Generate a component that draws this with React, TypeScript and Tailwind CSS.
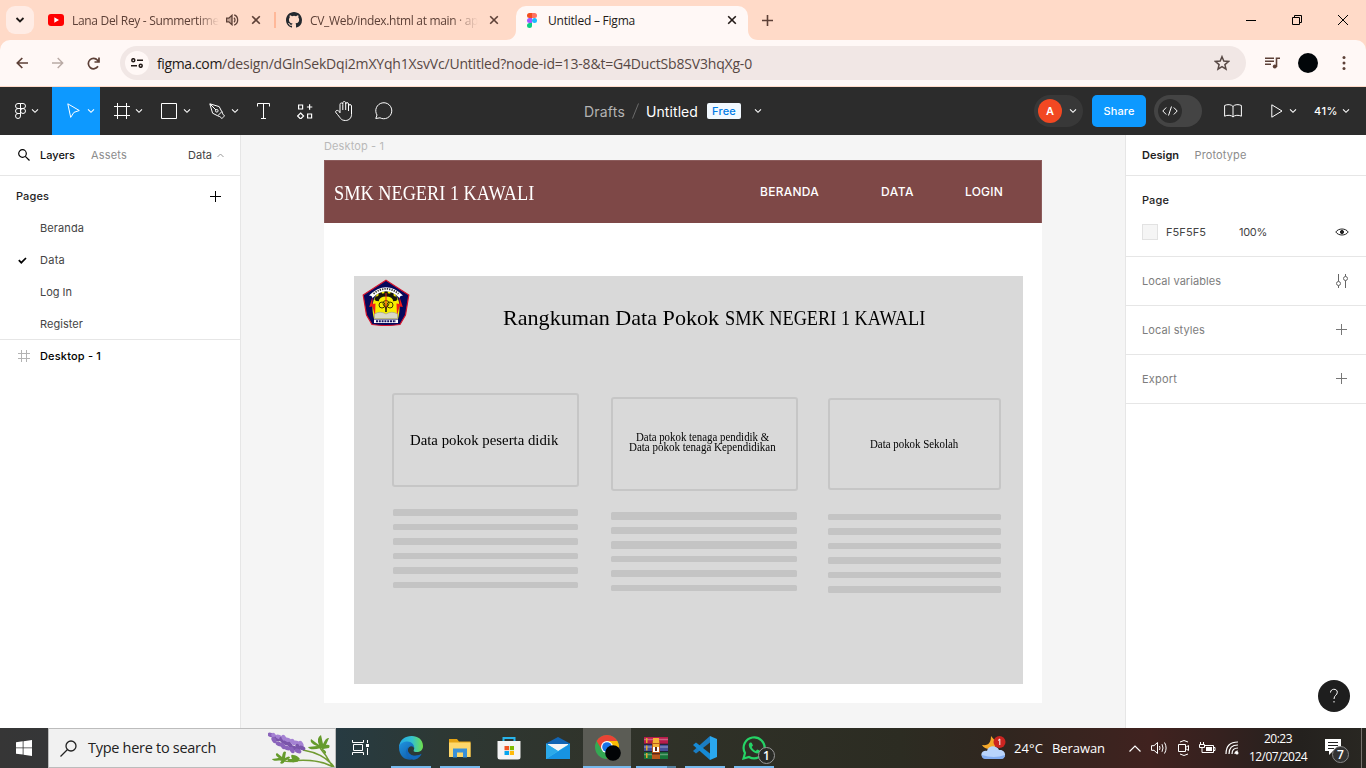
import React, { useLayoutEffect, useRef, useState } from "react";

/** Text set to a fixed measure: the tracking is worked out from the natural width. */
function T({ w, className = "", children }: { w: number; className?: string; children: string }) {
  const ref = useRef<HTMLSpanElement>(null);
  const [tracking, setTracking] = useState(0);
  useLayoutEffect(() => {
    const el = ref.current;
    if (!el) return;
    const natural = el.getBoundingClientRect().width;
    setTracking((w - natural) / children.length);
  }, [w, children]);
  return (
    <span className={"block shrink-0 whitespace-nowrap " + className} style={{ width: w }}>
      <span ref={ref} className="inline-block" style={{ letterSpacing: tracking }}>
        {children}
      </span>
    </span>
  );
}

/** Display text condensed or widened to a fixed measure. */
function Display({ w, className = "", children }: { w: number; className?: string; children: string }) {
  const ref = useRef<HTMLSpanElement>(null);
  const [scale, setScale] = useState(1);
  useLayoutEffect(() => {
    if (ref.current) setScale(w / ref.current.offsetWidth);
  }, [w, children]);
  return (
    <span className={"block shrink-0 whitespace-nowrap font-['Liberation_Serif',serif] " + className} style={{ width: w }}>
      <span ref={ref} className="inline-block origin-left" style={{ transform: `scaleX(${scale})` }}>
        {children}
      </span>
    </span>
  );
}

type IconProps = { w: number; h: number; className?: string; children: React.ReactNode; sw?: number };
function Icon({ w, h, className = "", children, sw = 1 }: IconProps) {
  return (
    <svg
      width={w}
      height={h}
      viewBox={`0 0 ${w} ${h}`}
      fill="none"
      stroke="currentColor"
      strokeWidth={sw}
      className={"block shrink-0 " + className}
    >
      {children}
    </svg>
  );
}

const Chevron = ({ className = "" }: { className?: string }) => (
  <Icon w={8} h={6} sw={1.1} className={className}>
    <path d="M1 1.3 4 4.3 7 1.3" />
  </Icon>
);
const Close = ({ className = "" }: { className?: string }) => (
  <Icon w={10} h={10} sw={1.6} className={className}>
    <path d="M1.2 1.2 8.8 8.8M8.8 1.2 1.2 8.8" />
  </Icon>
);
const Plus = ({ className = "" }: { className?: string }) => (
  <Icon w={11} h={11} className={className}>
    <path d="M5.5 0v11M0 5.5h11" />
  </Icon>
);

const UI = "font-['Open_Sans','Noto_Sans',sans-serif]";

function TabStrip() {
  return (
    <div className={"flex h-10 shrink-0 items-center bg-[#ffdac8] pl-1.5 text-[12px] text-[#5d4037] " + UI}>
      <div className="flex h-7 w-7 shrink-0 items-center justify-center rounded-[9px] bg-[#ffece5] text-[#1f1a18]">
        <Icon w={10} h={8} sw={1.8}><path d="M1.5 2 5 5.5 8.5 2" /></Icon>
      </div>
      <Icon w={16} h={12} className="ml-3.5">
        <rect width="16" height="12" rx="3" fill="#f00" stroke="none" />
        <path d="M6.3 3.3v5.4L11 6z" fill="#fff" stroke="none" />
      </Icon>
      <div className="ml-2 mt-px overflow-hidden [mask-image:linear-gradient(to_right,#000_85%,transparent)]">
        <T w={147}>Lana Del Rey - Summertime</T>
      </div>
      <Icon w={13} h={12} sw={1.3} className="ml-[7px]">
        <path d="M.5 4.2h2.3L6 1.3v9.4L2.8 7.8H.5z" fill="currentColor" fillOpacity=".35" />
        <path d="M8 3.7c1.3 1.2 1.3 3.4 0 4.6M8.2.9c4.6 1.6 4.6 8.6 0 10.2" />
      </Icon>
      <Close className="ml-[12px]" />
      <div className="ml-[13px] h-4 w-[2px] bg-[#ffb899]" />
      <svg width="16" height="16" viewBox="0 0 16 16" className="ml-[10px] shrink-0" fill="#24292f">
        <path d="M8 0C3.58 0 0 3.58 0 8c0 3.54 2.29 6.53 5.47 7.59.4.07.55-.17.55-.38v-1.49c-2.01.37-2.53-.49-2.69-.94-.09-.23-.48-.94-.82-1.13-.28-.15-.68-.52-.01-.53.63-.01 1.08.58 1.23.82.72 1.21 1.87.87 2.33.66.07-.52.28-.87.51-1.07-1.78-.2-3.64-.89-3.64-3.95 0-.87.31-1.59.82-2.15-.08-.2-.36-1.02.08-2.12 0 0 .67-.21 2.2.82a7.6 7.6 0 0 1 4 0c1.53-1.04 2.2-.82 2.2-.82.44 1.1.16 1.92.08 2.12.51.56.82 1.27.82 2.15 0 3.07-1.87 3.75-3.65 3.95.29.25.54.73.54 1.48v2.2c0 .21.15.46.55.38A8.01 8.01 0 0 0 16 8c0-4.42-3.58-8-8-8z" />
      </svg>
      <div className="ml-2 mt-px overflow-hidden [mask-image:linear-gradient(to_right,#000_84%,transparent)]">
        <T w={168}>CV_Web/index.html at main · ap</T>
      </div>
      <Close className="ml-[11px]" />
      <svg width="10" height="10" viewBox="0 0 10 10" className="ml-[7px] shrink-0 self-end" fill="#fff8f6">
        <path d="M10 0v10H0C6 10 10 6 10 0z" />
      </svg>
      <div className="flex h-[34px] w-[232px] shrink-0 items-center self-end rounded-t-[10px] bg-[#fff8f6] pb-[6px] pl-[11px] text-[#231a17]">
        <Icon w={10} h={15} className="mt-px">
          <g stroke="none">
            <path d="M5 0H2.5a2.5 2.5 0 0 0 0 5H5z" fill="#f24e1e" />
            <path d="M5 0h2.5a2.5 2.5 0 0 1 0 5H5z" fill="#ff7262" />
            <path d="M5 5H2.5a2.5 2.5 0 0 0 0 5H5z" fill="#a259ff" />
            <circle cx="7.5" cy="7.5" r="2.5" fill="#1abcfe" />
            <path d="M5 10H2.5A2.5 2.5 0 1 0 5 12.500z" fill="#0acf83" />
          </g>
        </Icon>
        <T w={87} className="ml-[11px] mt-[2px]">Untitled – Figma</T>
        <Close className="ml-[92px]" />
      </div>
      <svg width="10" height="10" viewBox="0 0 10 10" className="shrink-0 self-end" fill="#fff8f6">
        <path d="M0 0v10h10C4 10 0 6 0 0z" />
      </svg>
      <Icon w={11} h={11} sw={1.6} className="ml-[4px]"><path d="M5.5 0v11M0 5.500h11" /></Icon>
      <div className="ml-auto flex items-center text-black">
        <Icon w={10} h={10}><path d="M0 5.5h10" /></Icon>
        <Icon w={10} h={10} className="ml-[36px]">
          <path d="M.5 2.500h7v7h-7zM2.500 2.500v-2h7v7h-2" />
        </Icon>
        <Icon w={10} h={10} className="ml-[36px] mr-[18px]"><path d="M0 0 10 10M10 0 0 10" /></Icon>
      </div>
    </div>
  );
}

function AddressBar() {
  return (
    <div className="h-[47px] shrink-0 bg-[#ffdac8]">
      <div className="flex h-[46px] items-center rounded-t-[10px] bg-[#fff8f6] pl-4 text-[#5d4037]">
        <Icon w={12} h={12} sw={1.7}><path d="M12 6H1.500M6.300 1 1.300 6l5 5" /></Icon>
        <Icon w={12} h={12} sw={1.4} className="ml-6 text-[#b9aaa5]"><path d="M0 6h10.500M5.700 1l5 5-5 5" /></Icon>
        <Icon w={13} h={13} sw={1.7} className="ml-[23px]">
          <path d="M11 9.300A5.200 5.200 0 1 1 10.500 3.200L12 4.800M12 .5v4.500H7.500" />
        </Icon>
        <div className={"ml-[20px] flex h-[34px] w-[1126px] items-center rounded-full bg-[#f1e7e5] pl-[5px] text-[14px] " + UI}>
          <div className="flex h-6 w-6 items-center justify-center rounded-full bg-[#fff8f6] text-[#231a17]">
            <Icon w={12} h={10} sw={1.500}>
              <circle cx="2.300" cy="2.200" r="1.500" /><path d="M6 2.200h6M0 7.800h6" /><circle cx="9.700" cy="7.800" r="1.500" />
            </Icon>
          </div>
          <T w={65} className="ml-2 text-[#231a17]">figma.com</T>
          <T w={530} className="text-[#574844]">/design/dGlnSekDqi2mXYqh1XsvVc/Untitled?node-id=13-8&t=G4DuctSb8SV3hqXg-0</T>
          <Icon w={16} h={16} sw={1.500} className="ml-auto mr-4 text-[#574844]">
            <path d="m8 1.700 1.800 4.400 4.700.4-3.600 3.100 1.100 4.600L8 11.700l-4 2.500 1.100-4.600L1.500 6.500l4.700-.4z" />
          </Icon>
        </div>
        <Icon w={15} h={12} sw={1.600} className="ml-[19px]">
          <path d="M0 1.200h9M0 4.200h9M0 7.200h6M11.500 10V1.200H15" />
          <circle cx="9.800" cy="9.500" r="2" fill="currentColor" stroke="none" />
        </Icon>
        <div className="ml-[18px] h-5 w-5 rounded-full bg-[#020609]" />
        <Icon w={4} h={16} className="ml-[24px]">
          <g fill="currentColor" stroke="none"><circle cx="2" cy="2.500" r="1.500" /><circle cx="2" cy="8" r="1.500" /><circle cx="2" cy="13.500" r="1.500" /></g>
        </Icon>
      </div>
    </div>
  );
}

function FigmaBar() {
  return (
    <div className="flex h-12 shrink-0 items-center bg-[#2c2c2c] font-[Inter,sans-serif] text-white">
      <Icon w={11} h={16} className="ml-[15px]">
        <path d="M5.500.5H3a2.500 2.500 0 0 0 0 5h2.500zM5.500.5H8a2.500 2.500 0 0 1 0 5H5.500zM5.500 5.500H3a2.500 2.500 0 0 0 0 5h2.500zM5.500 10.500H3A2.500 2.500 0 1 0 5.500 13z" />
        <circle cx="8" cy="8" r="2.500" />
      </Icon>
      <Chevron className="ml-[5px]" />
      <div className="ml-[13px] flex h-12 w-12 items-center bg-[#0d99ff] pl-[15px]">
        <Icon w={13} h={16}><path d="m.8.8 11.500 6.700-5.400 1.900-3.200 5z" /></Icon>
        <Chevron className="ml-[7px]" />
      </div>
      <Icon w={16} h={16} className="ml-[14px]"><path d="M3.500 0v16M12.500 0v16M0 3.500h16M0 12.500h16" /></Icon>
      <Chevron className="ml-[5px]" />
      <Icon w={16} h={16} className="ml-[18px]"><path d="M.5.5h15v15H.5z" /></Icon>
      <Chevron className="ml-[6px]" />
      <Icon w={16} h={16} className="ml-[18px]">
        <path d="m.8.8 2.800 9.400 5.100 2.600 4.100-4.100-2.600-5.100zM1 1l6 6" />
        <circle cx="7.800" cy="7.800" r="1.300" />
        <path d="M13 8.500c.5 2.500 1.300 3.500 2.300 3.800-.3 1.700-1.300 2.700-3 3-.3-1-1.300-1.800-3.500-2.400" />
      </Icon>
      <Chevron className="ml-[6px]" />
      <Icon w={13} h={16} className="ml-[18px]"><path d="M.5 3.500v-3h12v3M6.500.5v15M4 15.500h5" /></Icon>
      <Icon w={16} h={15} sw={1.200} className="ml-[27px]">
        <path d="M1.600 1h4v4h-4zM10.600 10h4v4h-4zM12.600.3v5.400M9.900 3h5.400M3.600 9l3 3-3 3-3-3z" />
      </Icon>
      <Icon w={18} h={20} className="ml-[22px]">
        <path d="M5 12V3.500c0-2 2.800-2 2.800 0V9m0-6V2c0-2 2.900-2 2.900 0v7m0-6c0-1.900 2.800-1.900 2.800 0v7m0-5c0-1.900 3-1.900 3 0v8.500c0 3.500-2.500 6-6 6-5 0-5-3-9.400-7.600-1.500-1.700.8-3.400 2.300-2L5 11.400" />
      </Icon>
      <Icon w={18} h={18} className="ml-[22px]">
        <path d="M2 13A8 8 0 1 1 5 15.800L.8 16.500z" />
      </Icon>
      <T w={41} className="ml-[191px] text-[14px] text-[#b3b3b3]">Drafts</T>
      <Icon w={7} h={16} className="ml-[7px] text-[#6b6b6b]"><path d="M6.500.5.500 15.500" /></Icon>
      <T w={52} className="ml-[7px] text-[14px]">Untitled</T>
      <div className="ml-[9px] flex h-4 w-[34px] items-center justify-center rounded-[2px] bg-[#f2f9ff] text-[11px] font-medium text-[#007be5]">
        <T w={24}>Free</T>
      </div>
      <Chevron className="ml-[13px]" />
      <div className="ml-auto flex h-8 w-[49px] items-center rounded-full bg-[#383838] pl-1">
        <div className="flex h-6 w-6 items-center justify-center rounded-full bg-[#f24822] text-[11px] font-semibold">A</div>
        <Chevron className="ml-[7px]" />
      </div>
      <div className="ml-[9px] flex h-8 w-[54px] items-center justify-center rounded-[5px] bg-[#0d99ff] text-[11px] font-medium">
        <T w={31}>Share</T>
      </div>
      <div className="ml-2 flex h-8 w-12 items-center rounded-full bg-[#444] pl-1">
        <div className="flex h-6 w-6 items-center justify-center rounded-full bg-[#2c2c2c]">
          <Icon w={16} h={10}><path d="M4.200 1.500.8 5l3.400 3.500M11.800 1.500 15.200 5l-3.400 3.500M9.500.5l-3 9" /></Icon>
        </div>
      </div>
      <Icon w={18} h={14} className="ml-[22px]">
        <path d="M9 2.500C7.500.2 3 .2.600 1.500v10.700c2.500-1.300 6.900-1.300 8.400.8 1.500-2.100 5.900-2.100 8.400-.8V1.500C15 .2 10.500.2 9 2.500zM9 2.500V13" />
      </Icon>
      <Icon w={12} h={14} className="ml-[29px]"><path d="M.8.8 11 7 .8 13.200z" /></Icon>
      <Chevron className="ml-[6px]" />
      <T w={24} className="ml-[17px] text-[11px] font-medium">41%</T>
      <Chevron className="ml-[4px] mr-[16px]" />
    </div>
  );
}

function LeftPanel() {
  const pages: [string, number][] = [["Beranda", 44], ["Data", 25], ["Log In", 32], ["Register", 43]];
  return (
    <aside className="flex w-[241px] shrink-0 flex-col border-r border-[#e6e6e6] bg-white text-[11px] text-[#444]">
      <div className="flex h-[41px] items-center border-b border-[#e6e6e6] pl-[18px]">
        <Icon w={12} h={12} sw={1.200} className="text-black"><circle cx="4.500" cy="4.500" r="3.800" /><path d="m7.300 7.300 4.200 4.200" /></Icon>
        <T w={35} className="ml-[10px] font-medium text-[#111]">Layers</T>
        <T w={36} className="ml-[16px] text-[#8c8c8c]">Assets</T>
        <T w={24} className="ml-[61px]">Data</T>
        <Icon w={7} h={5} className="ml-[5px] text-[#999]"><path d="M.5 4 3.500 1l3 3" /></Icon>
      </div>
      <div className="flex h-9 items-center pl-4 pt-1">
        <T w={33} className="font-medium text-[#1e1e1e]">Pages</T>
        <Icon w={11} h={11} className="ml-[161px] text-black"><path d="M5.500 0v11M0 5.500h11" /></Icon>
      </div>
      <div className="border-b border-[#e6e6e6]">
        {pages.map(([name, w], i) => (
          <div key={name} className={"flex items-center pl-[18px] " + (i === 3 ? "h-[31px] pt-px" : "h-8")}>
            <div className="w-[22px]">
              {name === "Data" && <Icon w={9} h={7} sw={1.700} className="text-black"><path d="M.8 3.200 3.300 5.700 8 1" /></Icon>}
            </div>
            <T w={w}>{name}</T>
          </div>
        ))}
      </div>
      <div className="flex h-8 items-center pl-[18px]">
        <Icon w={12} h={12} className="text-[#b3b3b3]"><path d="M3.500 0v12M8.500 0v12M0 3.500h12M0 8.500h12" /></Icon>
        <T w={61} className="ml-[10px] font-medium text-black">Desktop - 1</T>
      </div>
    </aside>
  );
}

function Bars({ className, tall = false }: { className: string; tall?: boolean }) {
  return (
    <div className={"flex flex-col " + className}>
      {[0, 1, 2, 3, 4, 5].map((i) => (
        <div key={i} className="h-[14.500px]">
          <div className={"rounded-[1.500px] bg-[#c4c4c4] " + (tall && i < 3 ? "h-[7.600px]" : "h-[6.800px]")} />
        </div>
      ))}
    </div>
  );
}

function Canvas() {
  return (
    <main className="flex min-w-0 flex-1 flex-col bg-[#f5f5f5] pl-[83px]">
      <div className="flex h-[25px] items-center text-[11px] text-[#b9b9b9]">
        <T w={60} className="-mt-[3px]">Desktop - 1</T>
      </div>
      <div className="h-[543px] w-[718px] bg-white">
        <header className="flex h-[63px] items-center border border-[#8c5c5c] border-b-0 bg-[#7e4847] pl-[9px] text-white">
          <Display w={200} className="mt-[2px] text-[21.500px]">SMK NEGERI 1 KAWALI</Display>
          <T w={59} className="ml-[226px] text-[12px] font-medium">BERANDA</T>
          <T w={33} className="ml-[62px] text-[12px] font-medium">DATA</T>
          <T w={38} className="ml-[51px] text-[12px] font-medium">LOGIN</T>
        </header>
        <section className="ml-[30px] mt-[53px] h-[408px] w-[669px] bg-[#d9d9d9]">
          <div className="flex h-[117px] items-start">
            <Crest />
            <Display w={216} className="ml-[93px] mt-[26px] text-[22px] leading-8 text-black">Rangkuman Data Pokok</Display>
            <Display w={200} className="ml-[6px] mt-[26px] text-[21.500px] leading-8 text-black">SMK NEGERI 1 KAWALI</Display>
          </div>
          <div className="flex pl-[38px] text-black">
            <div className="w-[187px]">
              <div className="flex h-[94px] items-center justify-center rounded-[3px] border-2 border-[#c6c6c6] pr-[4px] text-[15px]">
                <Display w={148}>Data pokok peserta didik</Display>
              </div>
              <Bars className="ml-px mr-px mt-[22px]" />
            </div>
            <div className="ml-[32px] mt-[4px] w-[187px]">
              <div className="flex h-[94px] flex-col items-center justify-center rounded-[3px] border-2 border-[#c6c6c6] pb-[5px] pr-[4px] text-[11.500px] leading-[10px]">
                <Display w={133}>Data pokok tenaga pendidik &</Display>
                <Display w={147}>Data pokok tenaga Kependidikan</Display>
              </div>
              <Bars className="mr-px mt-[21px]" tall />
            </div>
            <div className="ml-[29.500px] mt-[5px] w-[173.500px]">
              <div className="flex h-[92px] items-center justify-center rounded-[3px] border-2 border-[#c6c6c6] pt-px text-[11.500px]">
                <Display w={88}>Data pokok Sekolah</Display>
              </div>
              <Bars className="mt-[23.500px]" />
            </div>
          </div>
        </section>
      </div>
    </main>
  );
}

function Crest() {
  return (
    <svg width="48" height="47" viewBox="0 0 48 47" className="ml-2 mt-[3px] shrink-0">
      <path d="M24 1.300 46.800 16 43.500 36 38 45.500Q24 47.500 10 45.500L4.500 36 1.200 16z" fill="#06085c" stroke="#d8142c" strokeWidth="1.200" />
      <path d="M12 40C8 24 12 12 24 12s16 12 12 28z" fill="#f6ee00" />
      <path d="M15 22C16 13.500 32 13.500 33 22" fill="none" stroke="#16160c" strokeWidth="3.500" />
      <path d="M14 21C15 11 33 11 34 21" fill="none" stroke="#16160c" strokeWidth="3" strokeDasharray="3.500 2.500" />
      <g fill="none" stroke="#3c3600" strokeWidth="1"><circle cx="20" cy="26" r="3" /><circle cx="24" cy="24.500" r="3" /><circle cx="28" cy="26" r="3" /></g>
      <path d="M24 14v16" stroke="#f21b16" strokeWidth="1" />
      <path d="M24 28v5" stroke="#111" strokeWidth="1.500" />
      <path d="m10.500 18-3.300 10 3.300-.5L13 37l.5-12.500-3 .5zM37.500 18l3.300 10-3.300-.5L35 37l-.5-12.500 3 .5z" fill="#f21b16" />
      <path d="M7 16.500Q24 0 41 16.500l-2.500.5-1 2Q24 5.500 10.500 19l-1-2z" fill="#fff" />
      <path d="M11.500 14.700Q24 5 36.500 14.700" fill="none" stroke="#333" strokeWidth="1.800" strokeDasharray="1.300 1.100" />
      <path d="M12.500 35q5.500-3.500 11.500 0 6-3.500 11.500 0v4.500h-23z" fill="#d8d8c8" stroke="#999" strokeWidth=".6" />
      <path d="M12 40.500h24V44H12z" fill="#fff" />
      <path d="M14 42.300h20" stroke="#161666" strokeWidth="2" strokeDasharray="2 .8" />
    </svg>
  );
}

function RightPanel() {
  return (
    <aside className="flex w-[241px] shrink-0 flex-col border-l border-[#e6e6e6] bg-white text-[11px] text-[#7d7d7d]">
      <div className="flex h-[41px] items-center border-b border-[#e6e6e6] pl-4">
        <T w={37} className="font-semibold text-[#1e1e1e]">Design</T>
        <T w={52} className="ml-[15.500px] text-[#8c8c8c]">Prototype</T>
      </div>
      <div className="h-[81px] border-b border-[#e6e6e6] pl-4 pt-2">
        <div className="flex h-8 items-center"><T w={27} className="font-medium text-[#1e1e1e]">Page</T></div>
        <div className="flex h-8 items-center text-[#444]">
          <div className="h-4 w-4 border border-[#e2e2e2] bg-[#f5f5f5]" />
          <T w={40} className="ml-2">F5F5F5</T>
          <T w={28} className="ml-[33px]">100%</T>
          <Icon w={14} h={8} sw={1} className="ml-[68px] text-[#222]">
            <path d="M.8 4C3.300 0 10.700 0 13.200 4 10.700 8 3.300 8 .8 4z" /><circle cx="7" cy="4" r="1.600" fill="currentColor" />
          </Icon>
        </div>
      </div>
      <div className="flex h-[49px] items-center border-b border-[#e6e6e6] pl-4">
        <T w={79}>Local variables</T>
        <Icon w={13} h={14} className="ml-[115px] text-[#666]">
          <path d="M2.500 0v7.500M2.500 11.500V14M9.500 14V6.500M9.500 2.500V0" /><circle cx="2.500" cy="9.500" r="2" /><circle cx="9.500" cy="4.500" r="2" />
        </Icon>
      </div>
      <div className="flex h-[49px] items-center border-b border-[#e6e6e6] pb-px pl-4">
        <T w={63} className="pt-px">Local styles</T><Plus className="ml-[131px] text-[#777]" />
      </div>
      <div className="flex h-[49px] items-center border-b border-[#e6e6e6] pb-px pl-4">
        <T w={35} className="pt-px">Export</T><Plus className="ml-[159px] text-[#777]" />
      </div>
      <div className="mb-4 ml-auto mr-4 mt-auto flex h-8 w-8 items-center justify-center rounded-full bg-[#1e1e1e] text-white">
        <Icon w={10} h={16}><path d="M1.500 4.500C1.500.3 8.300.2 8.300 4.200 8.300 7.500 5 7 5 11M5 13v1.500" /></Icon>
      </div>
    </aside>
  );
}

function AppCell({ children, mark = "bg-[#76b9ed] w-10", active = false }: { children: React.ReactNode; mark?: string; active?: boolean }) {
  return (
    <div className={"mr-px flex h-10 w-12 shrink-0 flex-col items-center " + (active ? "bg-[#5b5c55]" : "")}>
      <div className="flex h-[38px] items-center pt-[2px]">{children}</div>
      <div className={"h-[2px] " + mark} />
    </div>
  );
}

function Lavender() {
  const buds: [number, number][] = [
    [3, 5], [6, 6], [9, 9], [6, 10], [11, 7], [14, 10], [11, 14], [16, 8], [18, 13], [15, 16], [20, 10], [22, 15], [19, 18],
    [25, 12], [26, 18], [24, 20], [29, 13], [30, 17], [30, 21], [33, 14], [34, 18],
  ];
  return (
    <svg width="67" height="37" viewBox="0 0 67 37" className="shrink-0">
      <path d="M35 20q22 4 31 17M52 18q7 8 12 18M22 31q28-3 43 6M10 28q5 5 20 3" stroke="#719b32" strokeWidth="1.600" fill="none" />
      <g fill="#659b2c">
        <path d="M53 18q-11 3-13-1l9-1q-8-3-6-7l8 6q-3-7 2-10l2 9q3-7 6-6l-3 7q5-1 3 3l-6 1q5 3 2 5z" />
        <path d="M14 30q-9 2-10-1l7-1q-5-3-2-5l5 4q1-7 4-5l-1 6q5-3 5 0l-5 3q-2 4-5 2zM24 32q-6-1-4-3h4q-2-5 1-4 4 0 7 4-4 4-8 3z" />
      </g>
      {buds.map(([x, y], i) => (
        <ellipse key={i} cx={x} cy={y} rx="3.500" ry="2.200" transform={`rotate(${i % 2 ? 60 : 20} ${x} ${y})`} fill={["#8a63bb", "#a582d3", "#7a55aa"][i % 3]} />
      ))}
    </svg>
  );
}

function Taskbar() {
  return (
    <footer className={"flex h-10 shrink-0 items-center bg-[linear-gradient(90deg,#363636_0,#353637_48px,#273b42_336px,#2d3834_440px,#30332a_600px,#2c2c22_900px,#30261f_1000px,#40221f_1150px,#35211f_1220px,#24211e_1300px,#292722_1366px)] text-white " + UI}>
      <div className="flex w-12 shrink-0 justify-center">
        <Icon w={16} h={16}><path d="M0 2.300 6.700 1.300V7.500H0zM7.500 1.200 16 0v7.500H7.500zM0 8.300h6.700v6.300L0 13.700zM7.500 8.300H16V16l-8.500-1.200z" fill="#fff" stroke="none" /></Icon>
      </div>
      <div className="flex h-10 w-[288px] shrink-0 items-center border border-[#bcbcbc] bg-[#f1f1f1] pl-[11px] text-[#222]">
        <Icon w={17} h={17} sw={1.300}><circle cx="11" cy="6" r="5" /><path d="M7.500 9.500.5 16.500" /></Icon>
        <T w={128} className="ml-[11px] text-[14.500px]">Type here to search</T>
        <div className="ml-auto"><Lavender /></div>
      </div>
      <div className="mr-[3px] flex w-12 shrink-0 justify-center">
        <Icon w={17} h={15} className="-mt-[2px]"><path d="M.5 0v2.500h11V0M.5 15v-2.500h11V15M1.500 4.500h9v6h-9zM15.500 0v3M15.500 8v7" /><path d="M14 4h3v3h-3z" fill="currentColor" stroke="none" /></Icon>
      </div>
      <AppCell>
        <svg width="24" height="24" viewBox="0 0 24 24">
          <defs>
            <linearGradient id="eg" x1="0" x2="1"><stop offset="0" stopColor="#23a9e8" /><stop offset=".55" stopColor="#35c2cc" /><stop offset="1" stopColor="#6fe04b" /></linearGradient>
            <linearGradient id="eb" x1="0" x2="1" y2="1"><stop offset="0" stopColor="#1f94e0" /><stop offset="1" stopColor="#0c4d9b" /></linearGradient>
          </defs>
          <path d="M0 11C1-3.500 24-3.500 24 10c0 5-4 6.500-7.500 6-3-.5-1.500-2-1.300-3.500C15.200 8 7 4.500 0 11z" fill="url(#eg)" />
          <path d="M0 11C1 7 5 5.500 8.500 5.500c4.500 0 7 3.500 6.700 7-.8-3-5.200-3.200-6.200.5-1.400 5 6.500 9.500 13.500 4.800C18 26 0 27.500 0 11z" fill="url(#eb)" />
          <path d="M9.500 10.800C4 16 8 22 14.500 23.700c4 .2 7-3.500 8-5.900C15.500 22.500 7.600 18 9 13z" fill="#1268bd" />
        </svg>
      </AppCell>
      <AppCell>
        <svg width="22" height="19" viewBox="0 0 22 19"><path d="M0 0h8l2 2.500h11.500V18H0z" fill="#e5a313" /><path d="M0 3.500h21.500V18H0z" fill="#ffd86b" /><path d="M4 18.500v-9h14v9h-4v-5H8v5z" fill="#3b91d8" /></svg>
      </AppCell>
      <AppCell mark="bg-transparent w-10">
        <svg width="24" height="24" viewBox="0 0 24 24"><path d="M6.500 6V2h11v4" stroke="#28b5ec" strokeWidth="2" fill="none" /><path d="M.5 5h23v16q0 2.500-2.500 2.500H3Q.5 23.500.5 21z" fill="#f4f4f4" /><path d="M7.500 10H12v4.200H7.500z" fill="#f15424" /><path d="M12.800 10h4.200v4.200h-4.200z" fill="#7fba00" /><path d="M7.500 15H12v4H7.500z" fill="#05a6f0" /><path d="M12.800 15h4.200v4h-4.200z" fill="#ffba08" /></svg>
      </AppCell>
      <AppCell mark="bg-transparent w-10">
        <svg width="24" height="22" viewBox="0 0 24 22"><path d="M0 6.500 12 0l12 6.500V9H0z" fill="#1265b4" /><path d="M2 7h20v8H2z" fill="#f6f6f6" /><path d="M0 6.500 12 14l12-7.500V22H0z" fill="#36bdf1" /><path d="M0 22 24 7v15z" fill="#1793e2" /><path d="M0 6.500 12 14 0 22z" fill="#2ca9e9" /></svg>
      </AppCell>
      <AppCell active mark="bg-[#76b9ed] w-12">
        <svg width="26" height="26" viewBox="0 0 26 26" className="ml-[2px]"><circle cx="12" cy="12" r="12" fill="#34a853" /><path d="M22.400 6A12 12 0 0 1 12 24l5-9-5-9z" fill="#fbbc04" /><path d="M1.600 6A12 12 0 0 1 22.400 6H12L7 15z" fill="#ea4335" /><circle cx="12" cy="12" r="6" fill="#fff" /><circle cx="12" cy="12" r="4.800" fill="#1a73e8" /><circle cx="18" cy="18" r="7.800" fill="#020406" /></svg>
      </AppCell>
      <AppCell mark="w-10 bg-[linear-gradient(90deg,#76b9ed_31px,#55819f_31px)]">
        <svg width="24" height="22" viewBox="0 0 24 22"><path d="M0 0h24v7H0z" fill="#b81c4a" /><path d="M0 7.500h24v7H0z" fill="#474f9a" /><path d="M0 15h24v7H0z" fill="#17763a" /><path d="M0 2.500h24M0 10h24M0 17.500h24" stroke="#ffffff50" strokeWidth="1.500" /><path d="M0 7.200h24M0 14.700h24" stroke="#1c1c2c" /><path d="M2 1h1.500v5H2zM2 8.500h1.500v5H2zM2 16h1.500v5H2z" fill="#e1aa2c" /><path d="M8 4h8v18H8z" fill="#b9581e" /><path d="M9 1h6v5H9zM9 7h6v3H9z" fill="#f4b335" /><path d="M9 10h6v5H9z" fill="#fff" /><path d="M11 10h2v4h-2zM8 16h8v1.500H8z" fill="#5b291a" /></svg>
      </AppCell>
      <AppCell>
        <svg width="24" height="24" viewBox="0 0 24 24"><path d="M17 0 24 3v18l-7 3z" fill="#2aa8ef" /><path d="M17 0v6.500L3 17.500 0 15z" fill="#1b7dc3" /><path d="M17 24v-6.500L3 6.500 0 9z" fill="#168ad5" /></svg>
      </AppCell>
      <AppCell>
        <div className="relative h-6 w-6">
          <svg width="24" height="24" viewBox="0 0 24 24"><path d="M1.500 22.500 3 17A10.500 10.500 0 1 1 7 21z" fill="none" stroke="#25d366" strokeWidth="2.200" /><path d="M8.200 6.500c-4.500 2.500 3 12 8 10.800 2-.6 2-2 1.500-2.700l-2.500-1.200-1.500 1.500c-2-.8-3.300-2-4-3.900L11 9.500 9.700 6.800z" fill="#25d366" /></svg>
          <div className="absolute left-[16px] top-[11px] flex h-[17px] w-[17px] items-center justify-center rounded-full border border-[#999] bg-[#292b26] text-[12px] font-semibold leading-none">1</div>
        </div>
      </AppCell>
      <div className="ml-auto flex items-center text-[13px]">
        <svg width="25" height="24" viewBox="0 0 25 24"><path d="M10 0c0 6-2 10-9 9 3 6 15 5 15-2z" fill="#f4a829" /><path d="M2 22c-4-4 0-8 4-7 1-6 10-6 12-1 6-1 8 6 4 8.500z" fill="#b9d4fb" /><path d="M1 19q12 4 23 0-.5 4-4 4H4q-3 0-3-4z" fill="#83adf1" /><circle cx="18.500" cy="6" r="6" fill="#cb2521" /><path d="m17 4.500 1.800-1.500v6" stroke="#fff" fill="none" /></svg>
        <T w={29} className="ml-2 mt-px">24°C</T>
        <T w={53} className="ml-[9px] mt-px">Berawan</T>
        <Icon w={12} h={7} sw={1.200} className="ml-[24px]"><path d="m.5 6.500 5.500-5.500 5.500 5.500" /></Icon>
        <Icon w={17} h={14} className="ml-[10px]"><path d="M.5 4.700h2.500L6.500 1.500v11L3 9.300H.5zM8.500 5q1 2 0 4M11 3.200q2 3.800 0 7.600M13.500 1.500q3.200 5.500 0 11" /></Icon>
        <Icon w={12} h={16} className="ml-[10px]"><path d="M.5 4.500h7v7h-7zM7.500 7.500l3-2v5l-3-2M2 2q4-3 8 0M2 14q4 3 8 0" /></Icon>
        <Icon w={17} h={12} className="ml-[9px]"><path d="M5.500 3.500h9v7h-10M14.500 5.500h1.500v3h-1.500M1.500 0v2M4.500 0v2M.5 2.500h5v3h-5zM3 5.500v5h2" /><path d="M7 5h6v4H7z" fill="currentColor" stroke="none" /></Icon>
        <Icon w={14} h={14} sw={1.200} className="ml-[9px]"><path d="M1 13Q1 1 13 1M4 13q0-9 9-9M7 13q0-6 6-6M10 13q0-3 3-3" /><circle cx="12" cy="12" r="1.500" fill="currentColor" stroke="none" /></Icon>
        <div className="ml-[10px] flex w-[58px] flex-col items-center text-[12px] leading-[18px]">
          <T w={28}>20:23</T>
          <T w={58}>12/07/2024</T>
        </div>
        <div className="relative ml-[18px] h-[20px] w-[16px]">
          <Icon w={16} h={18}><path d="M0 1h16v12H8l-4 4v-4H0z" fill="#fff" stroke="none" /><path d="M3 4.500h10M3 7.500h10M3 10.500h6" stroke="#222" /></Icon>
          <div className="absolute left-[7px] top-[8px] flex h-[17px] w-[17px] items-center justify-center rounded-full border border-[#888] bg-[#333] text-[12px] font-semibold leading-none">7</div>
        </div>
        <div className="ml-[20px] mr-1 h-10 w-px bg-[#77736f]" />
      </div>
    </footer>
  );
}

export default function App() {
  return (
    <div className="flex h-[768px] w-[1366px] flex-col overflow-hidden font-[Inter,sans-serif]">
      <TabStrip />
      <AddressBar />
      <FigmaBar />
      <div className="flex min-h-0 flex-1">
        <LeftPanel />
        <Canvas />
        <RightPanel />
      </div>
      <Taskbar />
    </div>
  );
}
